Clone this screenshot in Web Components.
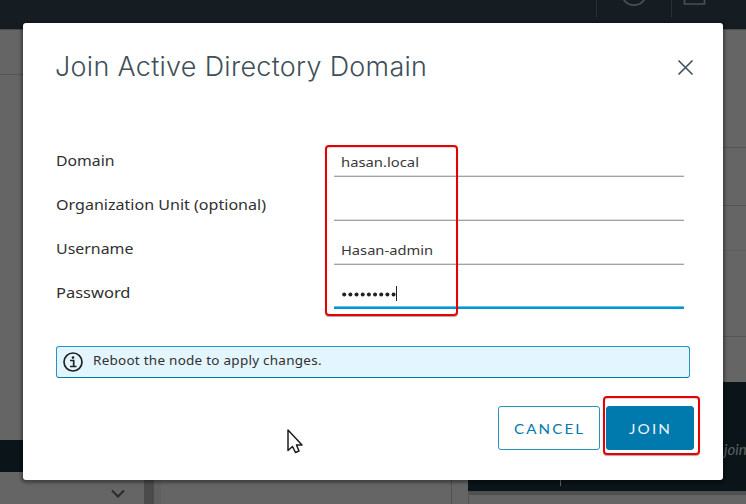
<!DOCTYPE html>
<html lang="en">
<head>
<meta charset="utf-8">
<title>Join Active Directory Domain</title>
<style>
html,body{margin:0;width:746px;height:504px;overflow:hidden;background:#656565;font-family:"Noto Sans","Liberation Sans",sans-serif;color:#333}
</style>
</head>
<body>
<app-page></app-page>
<join-dialog></join-dialog>
<script>
const define = (name, html, init) => customElements.define(name, class extends HTMLElement {
  connectedCallback() {
    if (this.shadowRoot) return;
    const t = document.createElement('template');
    t.innerHTML = html;
    this.attachShadow({ mode: 'open' }).append(t.content.cloneNode(true));
    if (init) init(this, this.shadowRoot);
  }
});

/* One line of text, widened to the width in its "w" attribute; "t" is its tracking in px. */
define('wide-text', `<style>:host{display:inline-block;white-space:nowrap;line-height:1}span{display:inline-block;transform-origin:0 0}</style><span><slot></slot></span>`, (el, root) => {
  const s = root.querySelector('span'), w = +el.getAttribute('w'), t = +(el.getAttribute('t') || 0);
  s.style.letterSpacing = t + 'px';
  const k = w / (s.getBoundingClientRect().width - t);
  el.style.width = w + 'px';
  s.style.transform = `scaleX(${k.toFixed(4)})`;
});

define('app-header', `<style>
:host{display:flex;justify-content:flex-end;height:30px;background:#151c22;border-bottom:1px solid #484c4f;box-sizing:border-box}
.cell{display:flex;height:17px;border-left:1px solid #2a3036;box-sizing:border-box;overflow:hidden}
.a{width:75px}.b{width:75px}
svg{display:block}
</style>
<div class="cell a"><svg width="74" height="17" fill="none" stroke="#4b4f51" stroke-width="1.7"><circle cx="37" cy="-7" r="12.2"/></svg></div>
<div class="cell b"><svg width="74" height="17" fill="none" stroke="#4b4f51" stroke-width="1.7"><path d="M12.500-2V4H32.500V-2"/></svg></div>`);

define('side-rail', `<style>
:host{display:flex;flex-direction:column;flex:none;width:144px}
.top{height:44px;border-bottom:1px solid #555}
.mid{flex:1}.band{height:32px;background:#0b1418}
.foot{height:32px;display:flex;justify-content:flex-end;padding-right:18px;box-sizing:border-box}
</style>
<div class="top"></div><div class="mid"></div><div class="band"></div>
<div class="foot"><svg width="16" height="32" fill="none" stroke="#262c2f" stroke-width="2"><path d="M2 18.500L8 24.500L14 18.500"/></svg></div>`);

define('content-card', `<style>
:host{display:flex;flex-direction:column;flex:1;min-width:0}
.r{box-sizing:border-box;border-bottom:1px solid #535657}
.band{height:109px;background:#0b1418;color:#5d6163;display:flex;flex-direction:column;justify-content:space-between;font:italic 15px Lato,sans-serif}
.note{padding:58px 0 0 256px;white-space:nowrap}
.tick{width:1px;height:8px;background:#61676a;margin:0 0 5px 92px}
.foot{flex:1;border-top:4px solid #4f5050;border-left:1px solid #555;}
</style>
<div class="r" style="height:118px"></div><div class="r" style="height:58px"></div><div class="r" style="height:45px;border-color:#5b5e5f"></div><div class="r" style="height:86px"></div><div style="height:45px"></div>
<div class="band"><div class="note">join</div><div class="tick"></div></div><div class="foot"></div>`);

define('app-page', `<style>
:host{display:flex;flex-direction:column;height:504px;overflow:hidden;background:#656565}
main{display:flex;flex:1;min-height:0}
.scroll,.gap,.panel,.gap2{flex:none}
.scroll{width:10px;background:#4b4b4b}.gap{width:7px;background:#606060}
.panel{width:290px;border-right:1px solid #525252}.gap2{width:16px}
</style><app-header></app-header>
<main><side-rail></side-rail><div class="scroll"></div><div class="gap"></div><div class="panel"></div><div class="gap2"></div><content-card></content-card></main>`);

define('form-row', `<style>
:host{display:flex;justify-content:space-between;height:44px}
.label{font-size:15px;padding-top:17px;color:#303030}
.field{width:350px;box-sizing:border-box;border-bottom:1px solid #a2a2a2;box-shadow:inset 0 -1px #dedede;padding:23px 0 0 7px;font-size:13px;color:#383838;display:flex}
:host([focused]) .field{border-bottom:2px solid #0095d3;box-shadow:inset 0 -1px #73c2e5}
</style><div class="label"><slot name="label"></slot></div><div class="field"><slot></slot></div>`);

define('password-dots', `<style>
:host{display:flex;height:15px;align-items:center;margin:-2px 0 0 1px}
svg{display:block}
</style><svg width="58" height="15" fill="#222">${Array.from({ length: 9 }, (_, i) => `<circle cx="${(2.2 + i * 6.17).toFixed(2)}" cy="8.500" r="2"/>`).join('')}<path d="M54 0h1v15h-1z"/></svg>`);

define('info-alert', `<style>
:host{display:flex;align-items:center;height:32px;box-sizing:border-box;border:1px solid #2892c3;border-bottom-color:#0079ad;border-radius:3px;background:#e3f5fe;color:#303030;font-size:13px;padding:0 0 1px 6px;gap:10px}
svg{display:block;flex:none}
::slotted(*){margin-top:-3px}
</style><svg width="20" height="20" viewBox="0 0 20 20" fill="none" stroke="#222"><circle cx="10" cy="10" r="9" stroke-width="1.700"/><path d="M7 8.500H10.700V14.300M7 14.500H13.500" stroke-width="1.700"/><circle cx="10" cy="5.600" r="1.300" fill="#222" stroke="none"/></svg><slot></slot>`);

define('action-button', `<style>
:host{display:flex;align-items:center;justify-content:center;width:102px;height:44px;box-sizing:border-box;border:1px solid #2890bd;border-radius:3px;color:#0079ad;font:13.500px Lato,sans-serif;padding:4px 2px 0 0}
:host([primary]){width:88px;background:#0079ad;border-color:#0079ad;color:#e9f4f9}
</style><slot></slot>`);

define('join-dialog', `<style>
:host{position:absolute;left:23px;top:23px;width:700px;height:457px;box-sizing:border-box;background:#fff;border-radius:3px;box-shadow:0 1px 3px 2px rgba(0,0,0,.35);padding:0 29px 0 33px;display:flex;flex-direction:column}
header{display:flex;justify-content:space-between;height:110px;padding:29px 0 0;box-sizing:border-box;font:300 26.500px Inter,"Open Sans",sans-serif;color:#40505a}
header wide-text{margin:1px 0 0 -1px}
header svg{margin:7px 0 0}
form{margin-right:10px;height:213px;box-sizing:border-box}
info-alert{margin-right:4px}
footer{display:flex;justify-content:flex-end;gap:6px;margin-top:28px}
.mark{position:absolute;box-sizing:border-box;border:2px solid #e60000;border-radius:4px;box-shadow:0 1px 1px rgba(0,0,0,.35),inset 0 1px 1px rgba(0,0,0,.15)}
.m1{left:302px;top:122px;width:133px;height:171px}
.m2{left:580px;top:373px;width:97px;height:59px}
.cursor{position:absolute;left:263px;top:404px}
</style>
<header><wide-text w="372" t=".3">Join Active Directory Domain</wide-text><svg width="17" height="17" viewBox="0 0 17 17" fill="none" stroke="#40505a" stroke-width="1.600"><path d="M1.500 1.500L15.500 15.500M15.500 1.500L1.500 15.500"/></svg></header>
<form>
<form-row><wide-text slot="label" w="58.500">Domain</wide-text><wide-text w="78">hasan.local</wide-text></form-row>
<form-row><wide-text slot="label" w="210">Organization Unit (optional)</wide-text></form-row>
<form-row><wide-text slot="label" w="77.500">Username</wide-text><wide-text w="92">Hasan-admin</wide-text></form-row>
<form-row focused><wide-text slot="label" w="74.500">Password</wide-text><password-dots></password-dots></form-row>
</form>
<info-alert><wide-text w="228.500" t=".25">Reboot the node to apply changes.</wide-text></info-alert>
<footer><action-button><wide-text w="69" t="1.9">CANCEL</wide-text></action-button><action-button primary><wide-text w="41" t="1.9">JOIN</wide-text></action-button></footer>
<div class="mark m1"></div><div class="mark m2"></div>
<svg class="cursor" width="20" height="28" viewBox="0 0 20 28"><path d="M2 3V23.500L6.500 19.500L9.500 25.500L13 24L10.500 18H16Z" fill="#fff" stroke="#1c1c1c" stroke-width="1.500" stroke-linejoin="round"/></svg>`);
</script>
</body>
</html>
